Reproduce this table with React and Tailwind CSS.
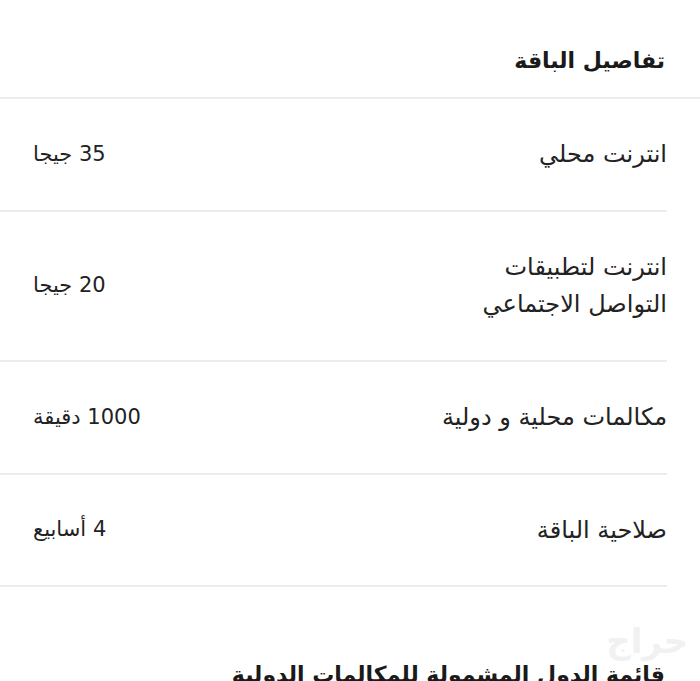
export default function App() {
  const rows = [
    { label: ["انترنت محلي"], value: "35 جيجا", h: "h-[113px]" },
    { label: ["انترنت لتطبيقات", "التواصل الاجتماعي"], value: "20 جيجا", h: "h-[150px]" },
    { label: ["مكالمات محلية و دولية"], value: "1000 دقيقة", h: "h-[113px]" },
    { label: ["صلاحية الباقة"], value: "4 أسابيع", h: "h-[112px]" },
  ];
  return (
    <div
      dir="rtl"
      className="relative w-[700px] h-[681px] overflow-hidden bg-white text-[#1d1d1f]"
      style={{ fontFamily: '"DejaVu Sans", "Noto Sans", sans-serif' }}
    >
      <div className="h-[99px] border-b-2 border-[#ececec] pr-[35px] flex items-center pt-[24px]">
        <h2 className="text-[22px] font-bold text-[#1a1a1a]">تفاصيل الباقة</h2>
      </div>
      <div className="pr-[33px]">
        {rows.map((r, i) => (
          <div
            key={i}
            className={`${r.h} flex items-center justify-between border-b-2 border-[#ececec]`}
          >
            <div className="text-[24px] leading-[37px] text-[#222]">
              {r.label.map((l, j) => (
                <div key={j}>{l}</div>
              ))}
            </div>
            <div className="pl-[33px] text-[21px] text-[#222]">{r.value}</div>
          </div>
        ))}
      </div>
      <div className="pr-[35px] pt-[71px]">
        <h2 className="text-[22px] font-bold text-[#1a1a1a] whitespace-nowrap">
          قائمة الدول المشمولة للمكالمات الدولية
        </h2>
      </div>
      <div className="absolute right-[12px] bottom-[14px] text-[34px] font-bold text-[#f1f1f1] select-none">
        حراج
      </div>
    </div>
  );
}
